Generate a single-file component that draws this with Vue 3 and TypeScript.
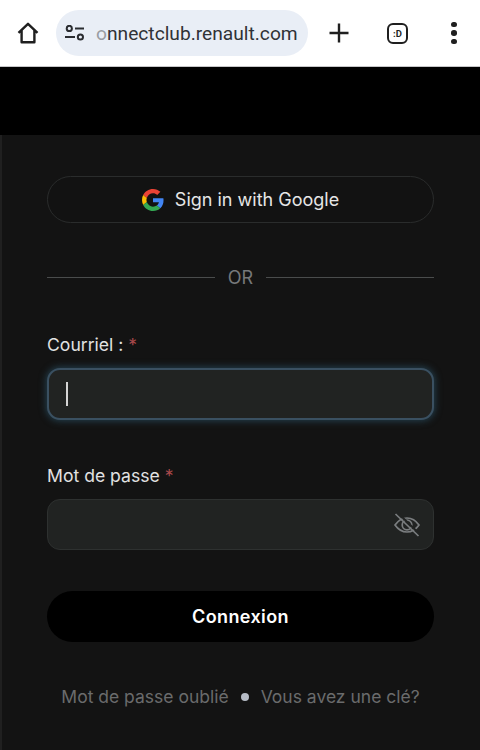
<script setup lang="ts">
import { ref } from 'vue';

const email = ref('');
const password = ref('');
</script>

<template>
  <div class="page">
    <header class="toolbar">
      <svg class="home" width="24" height="24" viewBox="0 0 24 24" fill="none" stroke="#1f1f1f" stroke-width="2.4" stroke-linejoin="round">
        <path d="M2.5 11.8 12 2.8l9.5 9M5.6 9.5v11.7h12.8V9.5" />
      </svg>
      <div class="omnibox">
        <svg width="20" height="16" viewBox="0 0 20 16" fill="none" stroke="#2a2c30" stroke-width="2">
          <circle cx="4.3" cy="3.4" r="2.6" />
          <path d="M10 3.6h9M0 12h10" />
          <circle cx="15.4" cy="12" r="2.6" />
        </svg>
        <span class="url"><span class="url-fade">o</span>nnectclub.renault.com</span>
      </div>
      <svg class="plus" width="20" height="20" viewBox="0 0 20 20" stroke="#1f1f1f" stroke-width="2.4">
        <path d="M0.5 10h19M10 0.5v19" />
      </svg>
      <div class="tabs">:D</div>
      <div class="menu"><i /><i /><i /></div>
    </header>

    <div class="band" />

    <main class="panel">
      <button class="google" type="button">
        <svg width="22" height="22" viewBox="0 0 48 48">
          <path fill="#ea4335" d="M24 9.500c3.500 0 6.700 1.200 9.200 3.600l6.900-6.900C35.900 2.400 30.500 0 24 0 14.600 0 6.500 5.400 2.600 13.200l8 6.200C12.500 13.700 17.800 9.500 24 9.500z" />
          <path fill="#4285f4" d="M47 24.500c0-1.600-.2-3.100-.4-4.500H24v9h12.900c-.6 3-2.200 5.500-4.700 7.200l7.700 6c4.500-4.200 7.100-10.300 7.100-17.700z" />
          <path fill="#fbbc05" d="M10.500 28.600c-.5-1.500-.8-3-.8-4.600s.3-3.200.8-4.600l-8-6.200C.9 16.500 0 20.100 0 24s.9 7.500 2.600 10.800l7.900-6.200z" />
          <path fill="#34a853" d="M24 48c6.500 0 11.900-2.100 15.900-5.800l-7.700-6c-2.200 1.400-4.900 2.300-8.200 2.300-6.200 0-11.500-4.200-13.400-9.900l-8 6.200C6.500 42.600 14.600 48 24 48z" />
        </svg>
        <span>Sign in with Google</span>
      </button>

      <div class="divider"><span>OR</span></div>

      <form class="form" @submit.prevent>
        <div class="field">
          <label for="email">Courriel : <em>*</em></label>
          <div class="input focused">
            <span class="caret" />
            <input id="email" v-model="email" type="email" />
          </div>
        </div>
        <div class="field">
          <label for="password">Mot de passe <em>*</em></label>
          <div class="input">
            <input id="password" v-model="password" type="password" />
            <svg class="eye" width="26" height="24" viewBox="0 0 26 24" fill="none" stroke="#7a7d7f" stroke-width="1.700">
              <path d="M1 12C4.500 7 8.500 5 13 5S21.500 7 25 12C21.500 17 17.500 19 13 19S4.500 17 1 12Z" />
              <circle cx="13" cy="12" r="4.800" />
              <path d="M3.500 2.500 24.500 23" stroke="#212322" stroke-width="2" transform="translate(1.500 -1.500)" />
              <path d="M1.500 1 24.500 23" />
            </svg>
          </div>
        </div>
        <button class="submit" type="submit">Connexion</button>
      </form>

      <nav class="links">
        <a>Mot de passe oublié</a>
        <i class="dot" />
        <a>Vous avez une clé?</a>
      </nav>
    </main>
  </div>
</template>

<style>
html,
body {
  margin: 0;
  background: #141414;
}
</style>

<style scoped>
.page {
  width: 480px;
  height: 750px;
  overflow: hidden;
  display: flex;
  flex-direction: column;
  font-family: Inter, 'Liberation Sans', sans-serif;
}
.toolbar {
  height: 66px;
  flex: none;
  background: #fff;
  border-bottom: 1px solid #c6c6c8;
  display: flex;
  align-items: center;
}
.home {
  margin-left: 16px;
  flex: none;
}
.omnibox {
  margin-left: 16px;
  width: 252px;
  height: 46px;
  border-radius: 23px;
  background: #e9eef6;
  display: flex;
  align-items: center;
  box-sizing: border-box;
  padding-left: 9px;
  flex: none;
  overflow: hidden;
}
.url {
  margin-left: 11px;
  font-family: Roboto, sans-serif;
  font-size: 19.2px;
  color: #303236;
  white-space: nowrap;
}
.url-fade {
  color: #9a9da3;
}
.plus {
  margin-left: 21px;
  flex: none;
}
.tabs {
  margin-left: 38px;
  width: 21px;
  height: 21px;
  box-sizing: border-box;
  border: 2.4px solid #1f1f1f;
  border-radius: 6px;
  font-family: Roboto, sans-serif;
  font-size: 9.5px;
  font-weight: 700;
  color: #1f1f1f;
  display: flex;
  align-items: center;
  justify-content: center;
  flex: none;
}
.menu {
  margin-left: 43px;
  display: flex;
  flex-direction: column;
  gap: 3px;
  flex: none;
}
.menu i {
  width: 5.5px;
  height: 5.5px;
  border-radius: 50%;
  background: #1f1f1f;
}
.band {
  height: 68px;
  flex: none;
  background: #000;
}
.panel {
  flex: 1;
  background: #131313;
  border-left: 2px solid #202020;
  padding: 41px 46px 0 45px;
  display: flex;
  flex-direction: column;
}
.google {
  height: 47px;
  box-sizing: border-box;
  border: 1px solid #2a2c2c;
  border-radius: 24px;
  background: #121212;
  display: flex;
  align-items: center;
  justify-content: center;
  gap: 11px;
  padding: 0;
  color: #e6e6e6;
  font: inherit;
  font-size: 18px;
}
.divider {
  margin-top: 43px;
  display: flex;
  align-items: center;
  gap: 13px;
  color: #76787a;
  font-size: 18px;
  height: 22px;
}
.divider::before,
.divider::after {
  content: '';
  flex: 1;
  height: 1px;
  background: #4a4c4c;
}
.form {
  display: flex;
  flex-direction: column;
}
.field {
  display: flex;
  flex-direction: column;
  gap: 12px;
  margin-top: 46px;
}
.field + .field {
  margin-top: 45px;
}
.field label {
  font-size: 17.6px;
  line-height: 22px;
  color: #e2e2e2;
}
.field em {
  font-style: normal;
  color: #a8494b;
}
.input {
  height: 51px;
  box-sizing: border-box;
  border: 1px solid #2e3130;
  border-radius: 13px;
  background: #212322;
  display: flex;
  align-items: center;
  padding: 0 13px 0 17px;
}
.input.focused {
  height: 52px;
  border: 2px solid #3a5061;
  box-shadow: 0 0 7px 1px #24404f;
}
.input input {
  flex: 1;
  min-width: 0;
  border: 0;
  outline: 0;
  background: transparent;
  color: #e2e2e2;
}
.caret {
  width: 2px;
  height: 24px;
  background: #d4d4d4;
  flex: none;
}
.eye {
  flex: none;
}
.submit {
  margin-top: 41px;
  height: 51px;
  border: 0;
  border-radius: 26px;
  background: #000;
  color: #fff;
  font: inherit;
  font-size: 18px;
  font-weight: 600;
  letter-spacing: 0.4px;
}
.links {
  margin-top: 44px;
  display: flex;
  align-items: center;
  justify-content: center;
  gap: 12px;
  color: #6a6b6c;
  font-size: 17.5px;
  line-height: 22px;
  white-space: nowrap;
}
.dot {
  width: 8px;
  height: 8px;
  border-radius: 50%;
  background: #b6bcc6;
}
</style>
